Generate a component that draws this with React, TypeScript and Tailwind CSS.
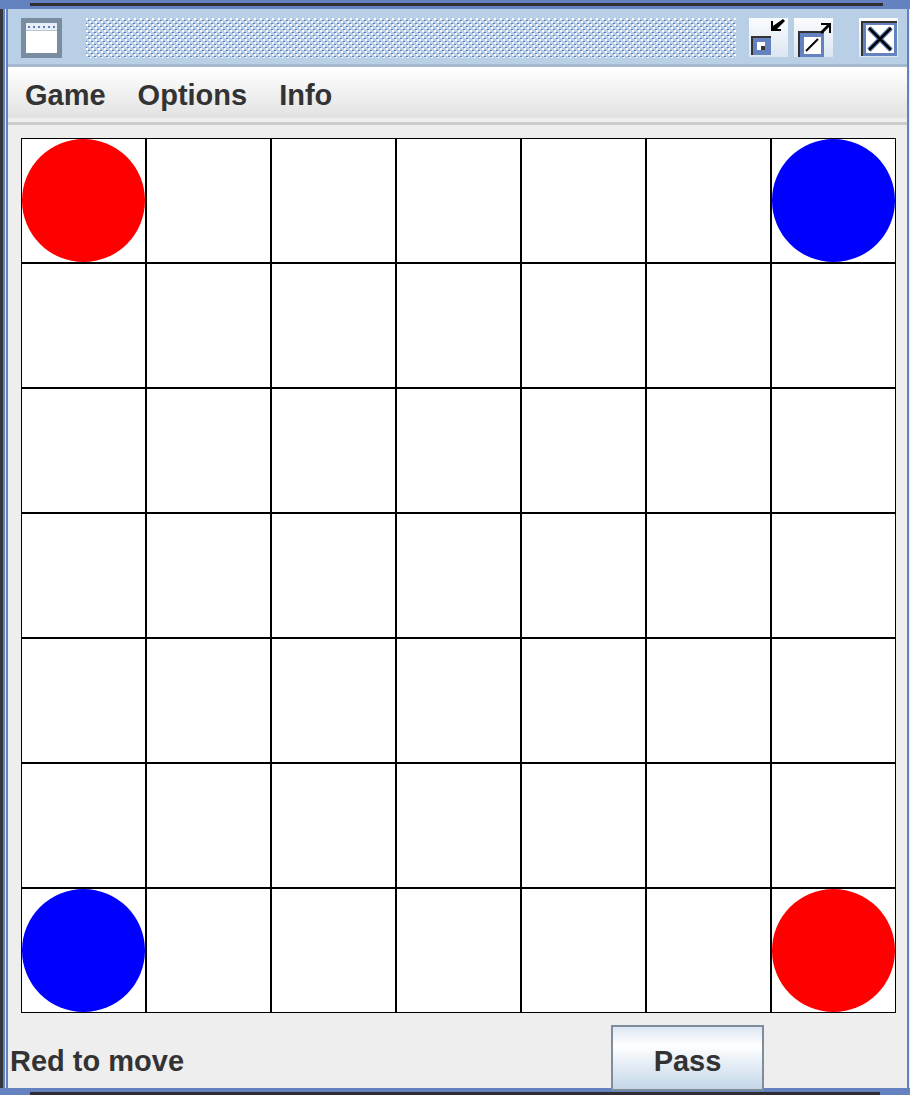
import React from "react";

const SIZE = 7;

// starting pieces: corners
function pieceAt(r: number, c: number): "red" | "blue" | null {
  if ((r === 0 && c === 0) || (r === SIZE - 1 && c === SIZE - 1)) return "red";
  if ((r === 0 && c === SIZE - 1) || (r === SIZE - 1 && c === 0)) return "blue";
  return null;
}

function WindowIcon() {
  return (
    <svg width="41" height="40" viewBox="0 0 41 40" className="block">
      <rect x="0" y="0" width="41" height="40" fill="#7a8c9f" />
      <rect x="5" y="5" width="31" height="30" fill="#ffffff" />
      <rect x="5" y="5" width="31" height="7" fill="#e8eef5" />
      {[7, 12, 17, 22, 27, 32].map((x) => (
        <rect key={x} x={x} y="8" width="2" height="2" fill="#5b7fc0" />
      ))}
      <rect x="5" y="12" width="31" height="1" fill="#b9c6d4" />
    </svg>
  );
}

function Dots() {
  return (
    <svg width="650" height="40" className="block">
      <defs>
        <pattern id="dots" width="6" height="6" patternUnits="userSpaceOnUse">
          <rect x="0" y="0" width="2" height="2" fill="#ffffff" />
          <rect x="2" y="2" width="2" height="1" fill="#5a7ec4" />
          <rect x="3" y="3" width="2" height="2" fill="#ffffff" />
          <rect x="5" y="5" width="1" height="1" fill="#5a7ec4" />
          <rect x="0" y="5" width="1" height="1" fill="#5a7ec4" />
        </pattern>
      </defs>
      <rect width="650" height="40" fill="url(#dots)" />
    </svg>
  );
}

function MinimizeBtn() {
  return (
    <div className="w-[39px] h-[39px] bg-[linear-gradient(#fbfcfe,#dbe6f1)]">
      <svg width="39" height="39" viewBox="0 0 39 39" className="block">
        <rect x="2" y="18" width="20" height="19" fill="#333333" />
        <rect x="4" y="20" width="18" height="17" fill="#6382bf" />
        <rect x="8" y="24" width="8" height="8" fill="#ffffff" />
        <rect x="12" y="28" width="4" height="4" fill="#333333" />
        <path d="M34 1 L36 3 L28 11 L32 11 L32 13 L22 13 L22 3 L24 3 L24 8 Z" fill="#000000" />
      </svg>
    </div>
  );
}

function MaximizeBtn() {
  return (
    <div className="w-[39px] h-[39px] bg-[linear-gradient(#fbfcfe,#dbe6f1)]">
      <svg width="39" height="39" viewBox="0 0 39 39" className="block">
        <rect x="4" y="13" width="26" height="26" fill="#333333" />
        <rect x="6" y="15" width="24" height="24" fill="#6382bf" />
        <rect x="10" y="19" width="17" height="17" fill="#ffffff" />
        <path d="M12 33 L24 21" stroke="#000000" strokeWidth="2" />
        <path d="M37 5 L37 15 L35 15 L35 9 L28 16 L26 14 L33 7 L27 7 L27 5 Z" fill="#000000" />
      </svg>
    </div>
  );
}

function CloseBtn() {
  return (
    <div className="w-[39px] h-[39px] bg-[linear-gradient(#fbfcfe,#dbe6f1)]">
      <svg width="39" height="39" viewBox="0 0 39 39" className="block">
        <rect x="2" y="3" width="36" height="35" fill="#333333" />
        <rect x="4" y="5" width="34" height="33" fill="#6382bf" />
        <rect x="7" y="7" width="28" height="28" fill="#ffffff" />
        <path d="M10 10 L32 32 M32 10 L10 32" stroke="#6382bf" strokeWidth="5" />
        <path d="M10 10 L32 32 M32 10 L10 32" stroke="#000000" strokeWidth="2.5" />
      </svg>
    </div>
  );
}

export default function App() {
  const font = "font-['Liberation_Sans',Arial,sans-serif]";

  return (
    <div className="w-[910px] h-[1095px] bg-[#6382bf] flex flex-col overflow-hidden">
      {/* strip above the window */}
      <div className="h-[9px] shrink-0 pl-[30px] pt-[3px]">
        <div className="w-[853px] h-[3px] bg-[#2f2f33]" />
      </div>

      <div className="flex flex-1 min-h-0">
        {/* left edge */}
        <div className="w-[8px] shrink-0 flex">
          <div className="w-[3px] bg-[#34363c]" />
          <div className="w-[2px] bg-[#6382bf]" />
          <div className="w-[1px] bg-[#e4e9f2]" />
          <div className="w-[2px] bg-[#6382bf]" />
        </div>

        {/* the window */}
        <div className="w-[899px] shrink-0 flex flex-col bg-[#eeeeee]">
          {/* title bar */}
          <div className="h-[55px] shrink-0 bg-[#b8cfe5] flex items-start pt-[9px] pl-[13px]">
            <WindowIcon />
            <div className="ml-[24px]">
              <Dots />
            </div>
            <div className="ml-[13px]">
              <MinimizeBtn />
            </div>
            <div className="ml-[6px]">
              <MaximizeBtn />
            </div>
            <div className="ml-[26px]">
              <CloseBtn />
            </div>
          </div>
          <div className="h-[3px] shrink-0 bg-[#a4b9cf]" />

          {/* menu bar */}
          <div
            className={`h-[51px] shrink-0 bg-[linear-gradient(#ffffff,#e2e2e2)] flex items-center pt-[7px] pl-[17px] gap-[32px] text-[29px] font-bold text-[#333333] ${font}`}
          >
            <span>Game</span>
            <span>Options</span>
            <span>Info</span>
          </div>
          <div className="h-[4px] shrink-0 bg-[#eeeeee]" />
          <div className="h-[3px] shrink-0 bg-[#cccccc]" />

          {/* board */}
          <div className="pt-[13px] pl-[13px]">
            <div className="grid grid-cols-7 w-[875px]">
              {Array.from({ length: SIZE * SIZE }).map((_, i) => {
                const r = Math.floor(i / SIZE);
                const c = i % SIZE;
                const p = pieceAt(r, c);
                return (
                  <div key={i} className="w-[125px] h-[125px] border border-black bg-white">
                    {p === "red" && <div className="w-full h-full rounded-full bg-[#ff0000]" />}
                    {p === "blue" && <div className="w-full h-full rounded-full bg-[#0000ff]" />}
                  </div>
                );
              })}
            </div>
          </div>

          {/* status row */}
          <div className={`flex-1 flex items-start ${font}`}>
            <div className="w-[603px] pl-[2px] pt-[28px] text-[29px] font-bold text-[#333333] leading-[40px]">
              Red to move
            </div>
            <button className="mt-[12px] w-[153px] h-[66px] border-2 border-[#7d8d9c] bg-[linear-gradient(#dce7f2,#ffffff_30%,#c3d6e8)] text-[29px] font-bold text-[#333333] flex items-start justify-center pt-[13px]">
              Pass
            </button>
          </div>
        </div>

        {/* right edge */}
        <div className="w-[2px] shrink-0 bg-[#6382bf]" />
        <div className="w-[1px] shrink-0 bg-[#e9edf4]" />
      </div>

      {/* strip below the window */}
      <div className="h-[7px] shrink-0 pt-[4px] pl-[30px]">
        <div className="w-[850px] h-[3px] bg-[#2f2f33]" />
      </div>
    </div>
  );
}
